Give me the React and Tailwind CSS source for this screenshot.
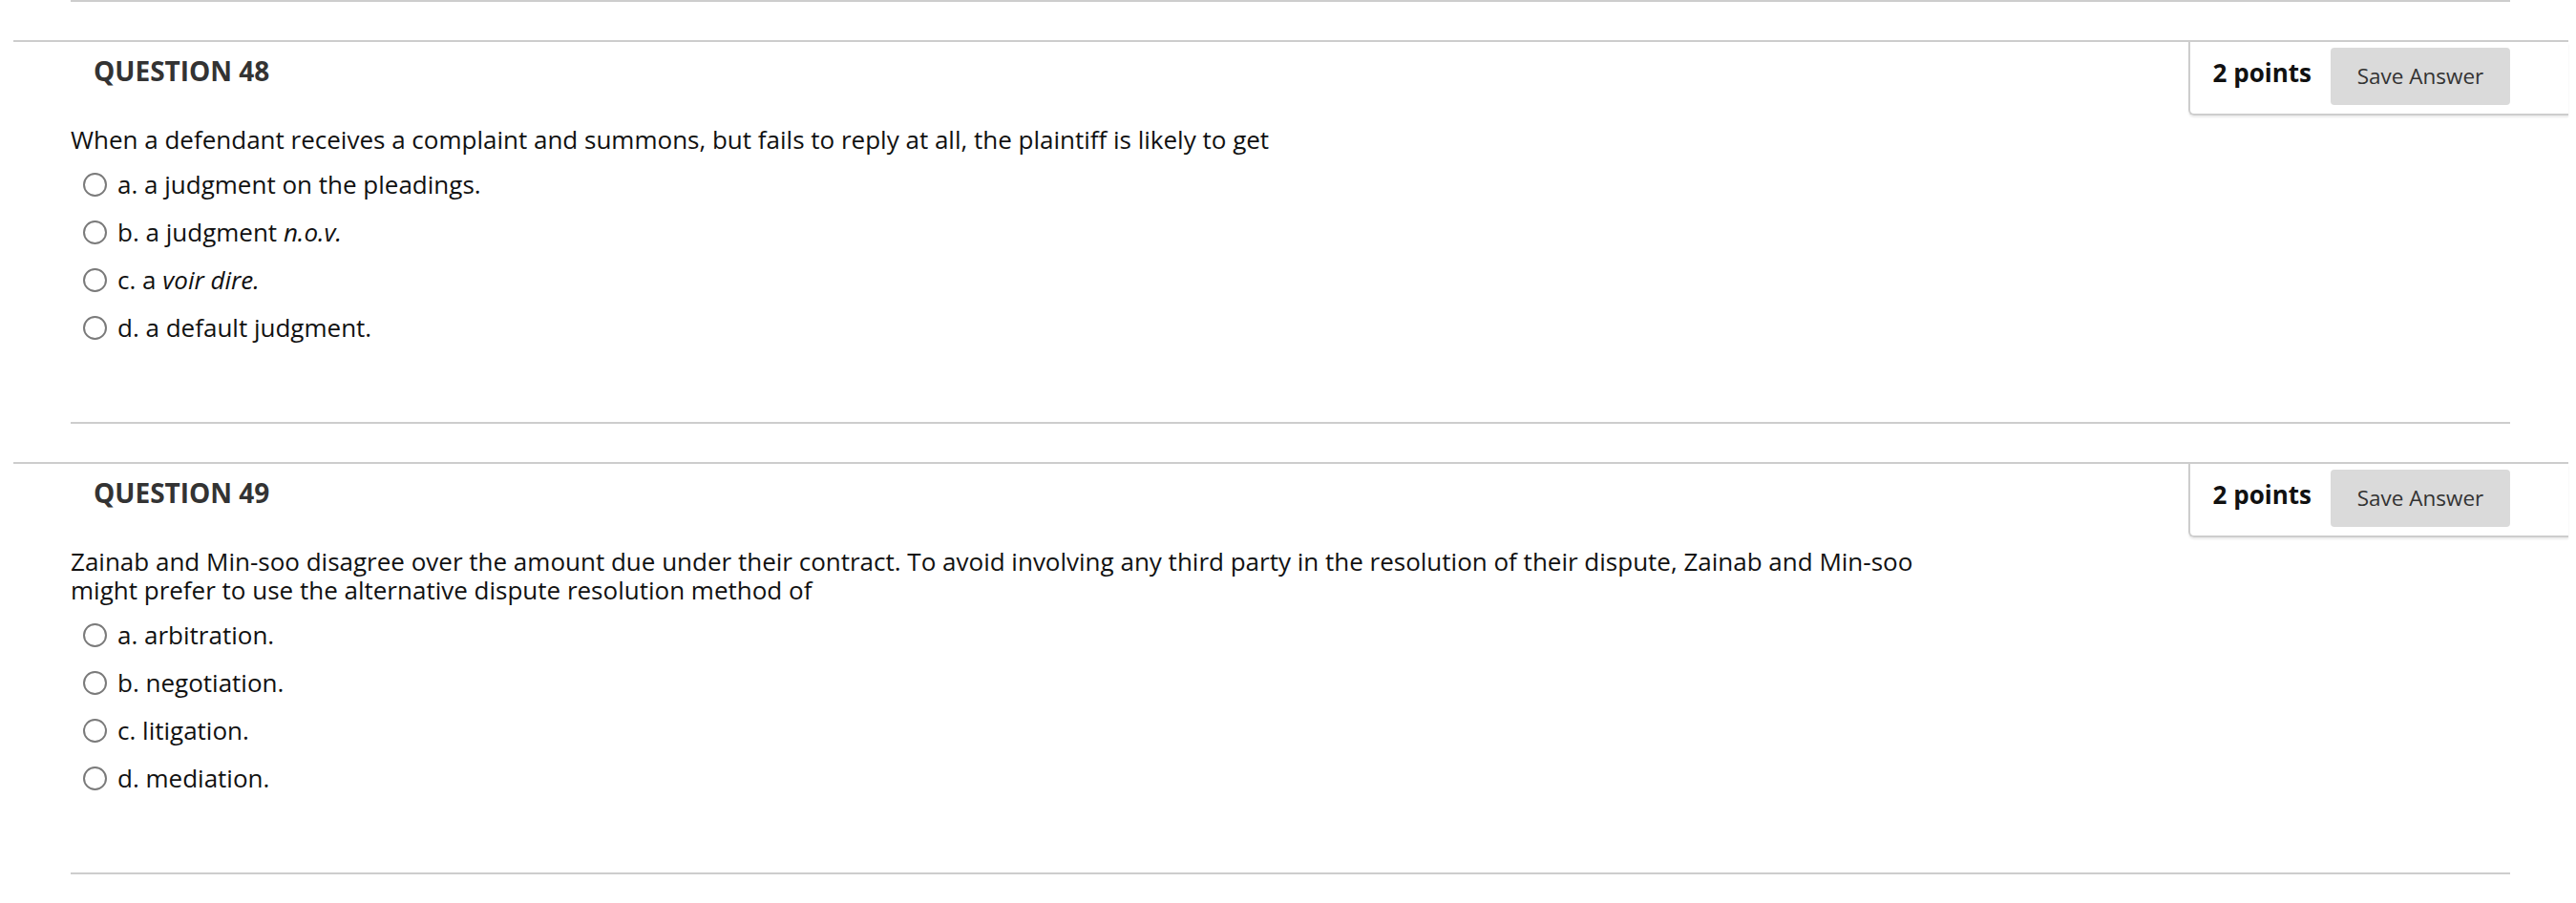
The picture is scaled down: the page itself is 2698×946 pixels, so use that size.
const questions = [
  {
    num: 48,
    text: ['When a defendant receives a complaint and summons, but fails to reply at all, the plaintiff is likely to get'],
    options: [
      { key: 'a.', body: <>a judgment on the pleadings.</> },
      { key: 'b.', body: <>a judgment <i>n.o.v.</i></> },
      { key: 'c.', body: <>a <i>voir dire.</i></> },
      { key: 'd.', body: <>a default judgment.</> },
    ],
  },
  {
    num: 49,
    text: [
      'Zainab and Min-soo disagree over the amount due under their contract. To avoid involving any third party in the resolution of their dispute, Zainab and Min-soo',
      'might prefer to use the alternative dispute resolution method of',
    ],
    options: [
      { key: 'a.', body: <>arbitration.</> },
      { key: 'b.', body: <>negotiation.</> },
      { key: 'c.', body: <>litigation.</> },
      { key: 'd.', body: <>mediation.</> },
    ],
  },
];

function Question({ num, text, options }) {
  return (
    <div className="ml-[14px] mr-[8px] mt-[40px] border-t-2 border-[#cdcdcd]">
      <div className="flex items-start justify-between">
        <h2 className="pl-[84px] pt-[11px] text-[28px] leading-[38px] font-bold text-[#333]">
          QUESTION {num}
        </h2>
        <div className="flex items-center border-l-2 border-b-2 border-[#cdcdcd] rounded-bl-[6px] pl-[24px] pr-[61px] pt-[6px] pb-[9px] shadow-[0_2px_2px_rgba(0,0,0,0.08)]">
          <span className="pb-[8px] text-[26px] leading-[34px] font-bold text-[#111]">2 points</span>
          <button className="ml-[20px] w-[188px] h-[60px] bg-[#dadada] rounded-[4px] text-[22.5px] text-[#333]">
            Save Answer
          </button>
        </div>
      </div>
      <div className="pl-[60px] pr-[61px]">
        <p className="mt-[10px] text-[26px] leading-[30px] text-[#111]">
          {text.map((line, i) => (
            <span key={i}>
              {line}
              {i < text.length - 1 && <br />}
            </span>
          ))}
        </p>
        <ul className="mt-[7px]">
          {options.map((o) => (
            <li key={o.key} className="flex items-center h-[50px] pl-[13px] text-[26px] leading-[30px] text-[#111]">
              <span className="w-[25px] h-[25px] rounded-full border-2 border-[#7a7a7a] bg-white shrink-0" />
              <span className="ml-[11px]">
                {o.key} {o.body}
              </span>
            </li>
          ))}
        </ul>
        <div className="mt-[74px] h-[2px] bg-[#cdcdcd]" />
      </div>
    </div>
  );
}

export default function App() {
  return (
    <div className="w-[2698px] h-[946px] bg-white overflow-hidden font-['Open_Sans',sans-serif]">
      <div className="ml-[74px] mr-[69px] h-[2px] bg-[#cdcdcd]" />
      {questions.map((q) => (
        <Question key={q.num} {...q} />
      ))}
    </div>
  );
}
